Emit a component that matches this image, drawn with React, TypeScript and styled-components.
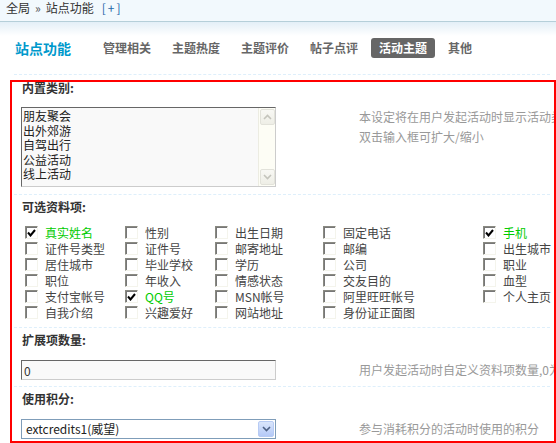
import React from "react";
import styled, { createGlobalStyle } from "styled-components";

const GlobalStyle = createGlobalStyle`
  html, body {
    margin: 0;
    padding: 0;
    background: #fff;
    overflow: hidden;
  }
  body {
    font-size: 12px;
    font-family: "Noto Sans CJK SC", "Liberation Sans", sans-serif;
    color: #333;
  }
`;

// 상단 경로 표시줄
const Breadcrumb = styled.div`
  box-sizing: border-box;
  height: 22px;
  padding: 0 6px;
  line-height: 15px;
  background: #f2f9fd;
  border-bottom: 1px solid #b5cfd9;
  color: #333;
  white-space: nowrap;
`;

const Sep = styled.span`
  margin: 0 5px;
  color: #555;
`;

const AddLink = styled.a`
  margin-left: 8px;
  color: #2366a8;
  letter-spacing: 2px;
  text-decoration: none;
`;

const Nav = styled.div`
  display: flex;
  align-items: flex-start;
  box-sizing: border-box;
  height: 52px;
  padding: 16px 0 0 15px;
  background: linear-gradient(to bottom, #e3eff7 0, #fff 14px);
`;

const NavTitle = styled.h2`
  margin: 0 24px 0 0;
  font-size: 14px;
  line-height: 20px;
  font-weight: bold;
  color: #09c;
`;

const Tab = styled.a<{ $active?: boolean }>`
  margin-right: 5px;
  padding: 0 8px;
  line-height: 20px;
  border-radius: 3px;
  font-weight: bold;
  color: ${(p) => (p.$active ? "#fff" : "#666")};
  background: ${(p) => (p.$active ? "#666" : "transparent")};
  text-decoration: none;
`;

const TableTop = styled.div`
  margin: 0 6px 0 14px;
  height: 5px;
  border-top: 1px dashed #deeffb;
`;

// 빨간 강조 상자
const Highlight = styled.div`
  margin-left: 10px;
  border: 2px solid #f00;
  overflow: hidden;
`;

const Section = styled.div<{ $last?: boolean }>`
  margin: 0 4px 0 2px;
  border-bottom: ${(p) => (p.$last ? "none" : "1px dashed #deeffb")};
`;

const Title = styled.div<{ $first?: boolean }>`
  margin-top: ${(p) => (p.$first ? "-6px" : "0")};
  padding: 5px 0 ${(p) => (p.$first ? "12px" : "13px")} 8px;
  line-height: 14px;
  font-weight: bold;
  color: #333;
`;

const Body = styled.div<{ $pb: number }>`
  display: flex;
  align-items: flex-start;
  padding: 0 0 ${(p) => p.$pb}px 7px;
`;

const Desc = styled.div`
  margin-left: 83px;
  line-height: 20px;
  color: #999;
  white-space: nowrap;
`;

const ListBox = styled.div`
  display: flex;
  flex: none;
  box-sizing: border-box;
  width: 255px;
  height: 80px;
  border: 1px solid;
  border-color: #666 #ccc #ccc #666;
  background: #f9f9f9;
`;

const ListText = styled.div`
  flex: 1;
  padding: 1px 0 0 1px;
  line-height: 14.5px;
  color: #222;
`;

const ScrollBar = styled.div`
  display: flex;
  flex-direction: column;
  justify-content: space-between;
  width: 16px;
  padding: 1px 0;
  background: #fdfdf5;
  border-left: 1px solid #ecece2;
`;

const ScrollBtn = styled.div`
  display: flex;
  align-items: center;
  justify-content: center;
  width: 13px;
  height: 14px;
  margin-left: 1px;
  border: 1px solid #e2e2da;
  border-radius: 2px;
  background: linear-gradient(to bottom, #f8f8f4, #eeeee6);
`;

const Arrow = ({ up, color }: { up?: boolean; color: string }) => (
  <svg width="9" height="6" viewBox="0 0 9 6">
    <path
      d={up ? "M1 5 L4.5 1.5 L8 5" : "M1 1 L4.5 4.5 L8 1"}
      fill="none"
      stroke={color}
      strokeWidth="1.6"
    />
  </svg>
);

const CheckGrid = styled.div`
  display: grid;
  grid-template-columns: 100px 90px 108px 160px 1fr;
  grid-auto-rows: 16px;
  margin-top: -1px;
  padding: 0 0 5px 11px;
`;

const CheckItem = styled.label<{ $on?: boolean }>`
  display: flex;
  align-items: flex-start;
  gap: 7px;
  line-height: 13px;
  white-space: nowrap;
  color: ${(p) => (p.$on ? "#00cc00" : "#444")};
`;

const Box = styled.span`
  display: flex;
  align-items: center;
  justify-content: center;
  flex: none;
  box-sizing: border-box;
  width: 13px;
  height: 13px;
  border: 1px solid;
  border-color: #8a8a82 #f4f4ec #f4f4ec #8a8a82;
  box-shadow: inset 1px 1px 0 #777;
  background: #fff;
`;

const TextInput = styled.input`
  flex: none;
  box-sizing: border-box;
  width: 255px;
  height: 20px;
  margin: 0;
  padding: 0 2px;
  border: 1px solid;
  border-color: #666 #ccc #ccc #666;
  background: #f9f9f9;
  font: 12px "Noto Sans CJK SC", "Liberation Sans", sans-serif;
  color: #333;
  outline: none;
`;

const SelectBox = styled.div`
  display: flex;
  align-items: center;
  flex: none;
  box-sizing: border-box;
  width: 255px;
  height: 20px;
  border: 1px solid #7f9db9;
  background: #fff;
`;

const SelectText = styled.span`
  flex: 1;
  padding-left: 4px;
  line-height: 18px;
  color: #222;
`;

const SelectBtn = styled.span`
  display: flex;
  align-items: center;
  justify-content: center;
  box-sizing: border-box;
  width: 16px;
  height: 16px;
  margin-right: 1px;
  border: 1px solid #b7cbf4;
  border-radius: 2px;
  background: linear-gradient(to bottom, #dae6fc, #b4c9f7);
`;

const categories = ["朋友聚会", "出外郊游", "自驾出行", "公益活动", "线上活动"];

const fields: [string, boolean][] = [
  ["真实姓名", true], ["性别", false], ["出生日期", false], ["固定电话", false], ["手机", true],
  ["证件号类型", false], ["证件号", false], ["邮寄地址", false], ["邮编", false], ["出生城市", false],
  ["居住城市", false], ["毕业学校", false], ["学历", false], ["公司", false], ["职业", false],
  ["职位", false], ["年收入", false], ["情感状态", false], ["交友目的", false], ["血型", false],
  ["支付宝帐号", false], ["QQ号", true], ["MSN帐号", false], ["阿里旺旺帐号", false], ["个人主页", false],
  ["自我介绍", false], ["兴趣爱好", false], ["网站地址", false], ["身份证正面图", false],
];

const tabs = ["管理相关", "主题热度", "主题评价", "帖子点评", "活动主题", "其他"];

function App() {
  return (
    <>
      <GlobalStyle />
      <Breadcrumb>
        全局<Sep>»</Sep>站点功能
        <AddLink>[+]</AddLink>
      </Breadcrumb>
      <Nav>
        <NavTitle>站点功能</NavTitle>
        {tabs.map((t) => (
          <Tab key={t} $active={t === "活动主题"}>
            {t}
          </Tab>
        ))}
      </Nav>
      <TableTop />
      <Highlight>
        <Section>
          <Title $first>内置类别:</Title>
          <Body $pb={7}>
            <ListBox>
              <ListText>
                {categories.map((c) => (
                  <div key={c}>{c}</div>
                ))}
              </ListText>
              <ScrollBar>
                <ScrollBtn>
                  <Arrow up color="#c4c4bc" />
                </ScrollBtn>
                <ScrollBtn>
                  <Arrow color="#c4c4bc" />
                </ScrollBtn>
              </ScrollBar>
            </ListBox>
            <Desc>
              本设定将在用户发起活动时显示活动类别，每个类别一行
              <br />
              双击输入框可扩大/缩小
            </Desc>
          </Body>
        </Section>
        <Section>
          <Title>可选资料项:</Title>
          <CheckGrid>
            {fields.map(([name, on]) => (
              <CheckItem key={name} $on={on}>
                <Box>
                  {on && (
                    <svg width="9" height="8" viewBox="0 0 9 8">
                      <path d="M1 3.5 L3.5 6.5 L8 1" fill="none" stroke="#000" strokeWidth="2" />
                    </svg>
                  )}
                </Box>
                {name}
              </CheckItem>
            ))}
          </CheckGrid>
        </Section>
        <Section>
          <Title>扩展项数量:</Title>
          <Body $pb={6}>
            <TextInput readOnly defaultValue="0" />
            <Desc>用户发起活动时自定义资料项数量,0为不限制</Desc>
          </Body>
        </Section>
        <Section $last>
          <Title>使用积分:</Title>
          <Body $pb={2}>
            <SelectBox>
              <SelectText>extcredits1(威望)</SelectText>
              <SelectBtn>
                <Arrow color="#4d6185" />
              </SelectBtn>
            </SelectBox>
            <Desc>参与消耗积分的活动时使用的积分</Desc>
          </Body>
        </Section>
      </Highlight>
    </>
  );
}

export default App;
